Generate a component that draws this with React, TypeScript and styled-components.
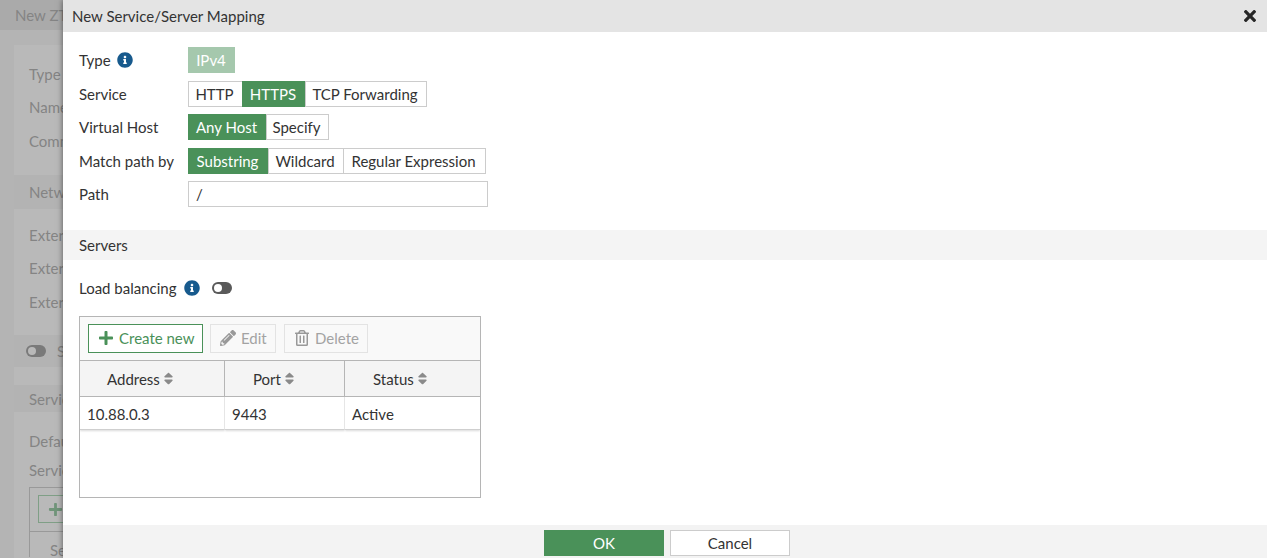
import React from 'react';
import styled, { createGlobalStyle } from 'styled-components';
import {
  FaInfoCircle,
  FaPencilAlt,
  FaPlus,
  FaRegTrashAlt,
  FaSort,
  FaTimes,
} from 'react-icons/fa';

const GlobalStyle = createGlobalStyle`
  html, body {
    margin: 0;
    padding: 0;
    height: 100%;
    overflow: hidden;
    background: #b5b5b5;
  }
  #root {
    height: 100%;
  }
  * {
    box-sizing: border-box;
  }
`;

const Page = styled.div`
  display: flex;
  width: 100%;
  height: 558px;
  overflow: hidden;
  font-family: Lato, 'Open Sans', sans-serif;
  font-size: 15px;
  color: #333;
`;

/* dimmed page behind the slide-in dialog */
const BackPane = styled.div`
  width: 63px;
  flex: none;
  overflow: hidden;
  background: #b4b4b4;
  color: #848484;
`;

const BackInner = styled.div`
  width: 400px;
`;

const BackHeader = styled.div`
  height: 30px;
  padding-left: 15px;
  line-height: 30px;
  background: #aaaaaa;
`;

const BackCard = styled.div`
  margin: 15px 0 0 14px;
  padding-top: 12px;
  background: #b9b9b9;
  height: 513px;
  overflow: hidden;
`;

const BackRow = styled.div<{ $height: number }>`
  display: flex;
  align-items: center;
  gap: 11px;
  height: ${(p) => p.$height}px;
  padding-left: 15px;
`;

const BackBand = styled(BackRow)`
  background: #b3b3b3;
`;

const BackToggle = styled.span`
  width: 20px;
  height: 12px;
  margin-left: -3px;
  border-radius: 6px;
  background: #7a7a7a;
  position: relative;
  &::before {
    content: '';
    position: absolute;
    left: 2px;
    top: 2px;
    width: 8px;
    height: 8px;
    border-radius: 50%;
    background: #b9b9b9;
  }
`;

const BackTable = styled.div`
  margin: 4px 0 0 15px;
  border: 1px solid #999;
  border-bottom: 0;
  height: 70px;
`;

const BackButton = styled.div`
  display: flex;
  align-items: center;
  margin: 7px 0 0 8px;
  width: 120px;
  height: 28px;
  padding-left: 9px;
  border: 1px solid #7f9f86;
  color: #71957a;
  font-size: 15px;
`;

const BackCell = styled.div`
  margin-top: 8px;
  padding: 9px 0 0 20px;
  border-top: 1px solid #999;
`;

const Dialog = styled.div`
  flex: 1;
  display: flex;
  flex-direction: column;
  background: #fff;
  box-shadow: 0 0 6px rgba(0, 0, 0, 0.55);
  position: relative;
`;

const TitleBar = styled.div`
  display: flex;
  align-items: center;
  justify-content: space-between;
  height: 32px;
  padding: 0 11px 0 9px;
  background: #e4e4e4;
  color: #333;
`;

const CloseIcon = styled(FaTimes)`
  width: 12px;
  height: 18px;
  color: #262626;
`;

const Form = styled.div`
  display: flex;
  flex-direction: column;
  gap: 7.5px;
  padding: 15px 16px 23px;
`;

const FormRow = styled.div`
  display: flex;
  align-items: center;
  height: 26px;
`;

const Label = styled.div`
  display: flex;
  align-items: center;
  gap: 6px;
  width: 109px;
  flex: none;
`;

const InfoIcon = styled(FaInfoCircle)`
  width: 16px;
  height: 16px;
  color: #175a8d;
`;

const Chip = styled.div`
  display: flex;
  align-items: center;
  justify-content: center;
  width: 47px;
  height: 26px;
  padding-right: 1px;
  background: #a5c8ad;
  color: #fff;
`;

const Segments = styled.div`
  display: flex;
  height: 26px;
`;

const Segment = styled.div<{ $active?: boolean; $width: number }>`
  display: flex;
  align-items: center;
  justify-content: center;
  width: ${(p) => p.$width}px;
  height: 26px;
  margin-left: -1px;
  padding-right: 2px;
  border: 1px solid ${(p) => (p.$active ? '#4a9159' : '#cccccc')};
  background: ${(p) => (p.$active ? '#4a9159' : '#fff')};
  color: ${(p) => (p.$active ? '#fff' : '#333')};
  &:first-child {
    margin-left: 0;
  }
`;

const PathInput = styled.div`
  display: flex;
  align-items: center;
  width: 300px;
  height: 26px;
  padding-left: 7px;
  border: 1px solid #cccccc;
`;

const SectionBand = styled.div`
  display: flex;
  align-items: center;
  height: 30px;
  padding-left: 16px;
  background: #f4f4f4;
`;

const Body = styled.div`
  flex: 1;
  padding: 15px 16px 0;
`;

const ToggleRow = styled.div`
  display: flex;
  align-items: center;
  height: 26px;
`;

const ToggleLabel = styled.span`
  margin-right: 7px;
`;

const Toggle = styled.span`
  position: relative;
  width: 20px;
  height: 12px;
  margin-left: 12px;
  border-radius: 6px;
  background: #5a5a5a;
  &::before {
    content: '';
    position: absolute;
    left: 2px;
    top: 2px;
    width: 8px;
    height: 8px;
    border-radius: 50%;
    background: #fff;
  }
`;

const TableBox = styled.div`
  width: 402px;
  height: 182px;
  margin-top: 15px;
  border: 1px solid #b5b5b5;
`;

const Toolbar = styled.div`
  display: flex;
  align-items: center;
  height: 44px;
  padding: 0 8px;
  background: #f9f9f9;
  border-bottom: 1px solid #b5b5b5;
`;

const ToolButton = styled.div<{ $primary?: boolean; $width: number; $gap: number }>`
  display: flex;
  align-items: center;
  gap: 5px;
  width: ${(p) => p.$width}px;
  height: 29px;
  margin-right: ${(p) => p.$gap}px;
  padding: 0 0 1px 9px;
  border: 1px solid ${(p) => (p.$primary ? '#4a9159' : '#e3e3e3')};
  background: ${(p) => (p.$primary ? '#fff' : 'transparent')};
  color: ${(p) => (p.$primary ? '#4a9159' : '#a3a3a3')};
`;

const ToolIcon = styled.span<{ $primary?: boolean }>`
  display: flex;
  color: ${(p) => (p.$primary ? '#4a9159' : '#999')};
  svg {
    width: 16px;
    height: 16px;
  }
`;

const TableGrid = styled.div`
  display: grid;
  grid-template-columns: 145px 120px 135px;
`;

const HeadCell = styled.div<{ $pad: number }>`
  display: flex;
  align-items: center;
  gap: 3px;
  height: 36px;
  padding-left: ${(p) => p.$pad}px;
  background: #f4f4f4;
  border-right: 1px solid #b5b5b5;
  border-bottom: 1px solid #b5b5b5;
  &:nth-child(3) {
    border-right: 0;
  }
`;

const SortIcon = styled(FaSort)`
  width: 11px;
  height: 15px;
  color: #8a8a8a;
`;

const DataCell = styled.div`
  display: flex;
  align-items: center;
  height: 33px;
  padding: 1px 0 0 7px;
  border-right: 1px solid #e6e6e6;
  border-bottom: 1px solid #cfcfcf;
  box-shadow: 0 1px 2px rgba(0, 0, 0, 0.15);
  clip-path: inset(0 0 -3px 0);
  &:last-child {
    border-right: 0;
  }
`;

const Footer = styled.div`
  display: flex;
  justify-content: center;
  gap: 6px;
  height: 33px;
  padding: 5px 0 0 4px;
  background: #f3f3f3;
`;

const FooterButton = styled.div<{ $primary?: boolean }>`
  display: flex;
  align-items: center;
  justify-content: center;
  width: 120px;
  height: 26px;
  border: 1px solid ${(p) => (p.$primary ? '#4a9159' : '#cccccc')};
  background: ${(p) => (p.$primary ? '#4a9159' : '#fff')};
  color: ${(p) => (p.$primary ? '#fff' : '#333')};
`;

export default function App(): JSX.Element {
  return (
    <Page>
      <GlobalStyle />
      <BackPane>
        <BackInner>
          <BackHeader>New ZTNA Server</BackHeader>
          <BackCard>
            <BackRow $height={33}>Type</BackRow>
            <BackRow $height={34}>Name</BackRow>
            <BackRow $height={34}>Comments</BackRow>
            <BackRow $height={17} />
            <BackBand $height={34}>Network</BackBand>
            <BackRow $height={9} />
            <BackRow $height={33}>External interface</BackRow>
            <BackRow $height={34}>External IP</BackRow>
            <BackRow $height={33}>External port</BackRow>
            <BackRow $height={17} />
            <BackBand $height={32}>
              <BackToggle />
              SAML
            </BackBand>
            <BackRow $height={18} />
            <BackBand $height={27}>Services</BackBand>
            <BackRow $height={12} />
            <BackRow $height={33}>Default</BackRow>
            <BackRow $height={26}>Service</BackRow>
            <BackTable>
              <BackButton>
                <FaPlus />
              </BackButton>
              <BackCell>Service</BackCell>
            </BackTable>
          </BackCard>
        </BackInner>
      </BackPane>
      <Dialog>
        <TitleBar>
          New Service/Server Mapping
          <CloseIcon />
        </TitleBar>
        <Form>
          <FormRow>
            <Label>
              Type
              <InfoIcon />
            </Label>
            <Chip>IPv4</Chip>
          </FormRow>
          <FormRow>
            <Label>Service</Label>
            <Segments>
              <Segment $width={55}>HTTP</Segment>
              <Segment $width={64} $active>
                HTTPS
              </Segment>
              <Segment $width={122}>TCP Forwarding</Segment>
            </Segments>
          </FormRow>
          <FormRow>
            <Label>Virtual Host</Label>
            <Segments>
              <Segment $width={79} $active>
                Any Host
              </Segment>
              <Segment $width={63}>Specify</Segment>
            </Segments>
          </FormRow>
          <FormRow>
            <Label>Match path by</Label>
            <Segments>
              <Segment $width={81} $active>
                Substring
              </Segment>
              <Segment $width={76}>Wildcard</Segment>
              <Segment $width={143}>Regular Expression</Segment>
            </Segments>
          </FormRow>
          <FormRow>
            <Label>Path</Label>
            <PathInput>/</PathInput>
          </FormRow>
        </Form>
        <SectionBand>Servers</SectionBand>
        <Body>
          <ToggleRow>
            <ToggleLabel>Load balancing</ToggleLabel>
            <InfoIcon />
            <Toggle />
          </ToggleRow>
          <TableBox>
            <Toolbar>
              <ToolButton $primary $width={115} $gap={7}>
                <ToolIcon $primary>
                  <FaPlus />
                </ToolIcon>
                Create new
              </ToolButton>
              <ToolButton $width={66} $gap={8}>
                <ToolIcon>
                  <FaPencilAlt />
                </ToolIcon>
                Edit
              </ToolButton>
              <ToolButton $width={84} $gap={0}>
                <ToolIcon>
                  <FaRegTrashAlt />
                </ToolIcon>
                Delete
              </ToolButton>
            </Toolbar>
            <TableGrid>
              <HeadCell $pad={27}>
                Address
                <SortIcon />
              </HeadCell>
              <HeadCell $pad={28}>
                Port
                <SortIcon />
              </HeadCell>
              <HeadCell $pad={28}>
                Status
                <SortIcon />
              </HeadCell>
              <DataCell>10.88.0.3</DataCell>
              <DataCell>9443</DataCell>
              <DataCell>Active</DataCell>
            </TableGrid>
          </TableBox>
        </Body>
        <Footer>
          <FooterButton $primary>OK</FooterButton>
          <FooterButton>Cancel</FooterButton>
        </Footer>
      </Dialog>
    </Page>
  );
}
